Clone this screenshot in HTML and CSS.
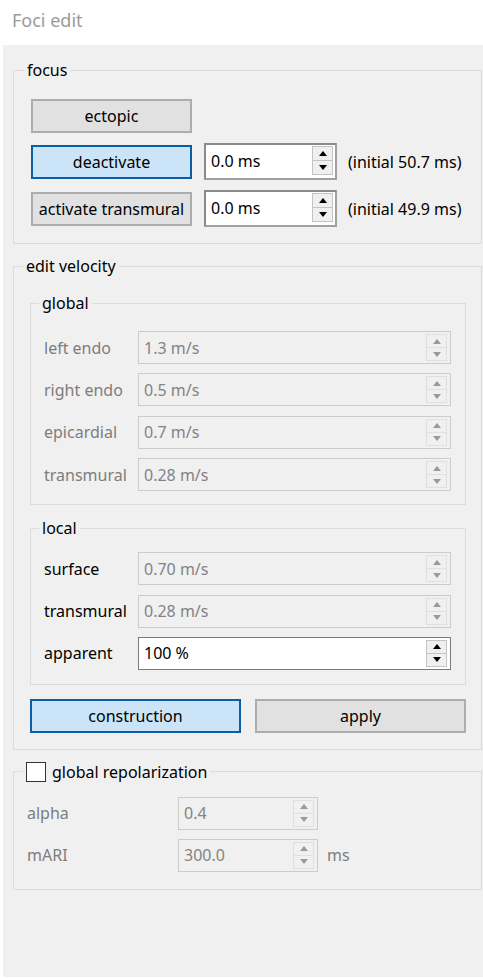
FILE: index.html
```html
<!DOCTYPE html>
<html lang="en">
<head>
<meta charset="utf-8">
<title>Foci edit</title>
<link rel="stylesheet" href="styles.css">
</head>
<body>
<div class="window">
  <header class="titlebar">Foci edit</header>
  <main class="panel">

    <fieldset class="group group-focus">
      <legend>focus</legend>
      <div class="focus-row row-ectopic">
        <button class="btn btn-focus">ectopic</button>
      </div>
      <div class="focus-row">
        <button class="btn btn-focus btn-on">deactivate</button>
        <div class="spin spin-focus">
          <span class="spin-value">0.0 ms</span>
          <span class="spin-arrows"><span class="arrow up"></span><span class="arrow down"></span></span>
        </div>
        <span class="note">(initial 50.7 ms)</span>
      </div>
      <div class="focus-row">
        <button class="btn btn-focus">activate transmural</button>
        <div class="spin spin-focus">
          <span class="spin-value">0.0 ms</span>
          <span class="spin-arrows"><span class="arrow up"></span><span class="arrow down"></span></span>
        </div>
        <span class="note">(initial 49.9 ms)</span>
      </div>
    </fieldset>

    <fieldset class="group group-velocity">
      <legend>edit velocity</legend>

      <fieldset class="group group-global">
        <legend>global</legend>
        <div class="form-grid">
          <span class="label off">left endo</span>
          <div class="spin off"><span class="spin-value">1.3 m/s</span><span class="spin-arrows"><span class="arrow up"></span><span class="arrow down"></span></span></div>
          <span class="label off">right endo</span>
          <div class="spin off"><span class="spin-value">0.5 m/s</span><span class="spin-arrows"><span class="arrow up"></span><span class="arrow down"></span></span></div>
          <span class="label off">epicardial</span>
          <div class="spin off"><span class="spin-value">0.7 m/s</span><span class="spin-arrows"><span class="arrow up"></span><span class="arrow down"></span></span></div>
          <span class="label off">transmural</span>
          <div class="spin off"><span class="spin-value">0.28 m/s</span><span class="spin-arrows"><span class="arrow up"></span><span class="arrow down"></span></span></div>
        </div>
      </fieldset>

      <fieldset class="group group-local">
        <legend>local</legend>
        <div class="form-grid">
          <span class="label">surface</span>
          <div class="spin off"><span class="spin-value">0.70 m/s</span><span class="spin-arrows"><span class="arrow up"></span><span class="arrow down"></span></span></div>
          <span class="label">transmural</span>
          <div class="spin off"><span class="spin-value">0.28 m/s</span><span class="spin-arrows"><span class="arrow up"></span><span class="arrow down"></span></span></div>
          <span class="label">apparent</span>
          <div class="spin spin-live"><span class="spin-value">100 %</span><span class="spin-arrows"><span class="arrow up"></span><span class="arrow down"></span></span></div>
        </div>
      </fieldset>

      <div class="action-row">
        <button class="btn btn-on">construction</button>
        <button class="btn">apply</button>
      </div>
    </fieldset>

    <fieldset class="group group-repol">
      <legend><span class="checkbox"></span><span>global repolarization</span></legend>
      <div class="repol-grid">
        <span class="label off">alpha</span>
        <div class="spin off spin-short"><span class="spin-value">0.4</span><span class="spin-arrows"><span class="arrow up"></span><span class="arrow down"></span></span></div>
        <span></span>
        <span class="label off">mARI</span>
        <div class="spin off spin-short"><span class="spin-value">300.0</span><span class="spin-arrows"><span class="arrow up"></span><span class="arrow down"></span></span></div>
        <span class="unit off">ms</span>
      </div>
    </fieldset>

  </main>
</div>
</body>
</html>
```
FILE: styles.css
```css
* { box-sizing: border-box; }

html, body {
  margin: 0;
  background: #ffffff;
}

body {
  font-family: "Noto Sans", "Open Sans", sans-serif;
  font-size: 16px;
  color: #000;
}

.window {
  width: 483px;
  height: 978px;
  display: flex;
  flex-direction: column;
}

.titlebar {
  height: 45px;
  padding: 7px 0 0 12px;
  color: #9a9a9a;
  font-size: 18px;
  line-height: 26px;
}

.panel {
  margin-left: 3px;
  height: 932px;
  background: #f0f0f0;
  padding: 15px 1px 0 10px;
  display: flex;
  flex-direction: column;
}

/* group boxes */
fieldset.group {
  margin: 0;
  min-width: 0;
  border: 1px solid #dcdcdc;
}

fieldset.group > legend {
  padding: 0 3px;
  height: 20px;
  line-height: 20px;
  font-size: 16px;
}

.group-focus { padding: 19px 10px 16px 17px; }
.group-focus > legend { margin-left: -7px; }

.group-velocity { margin-top: 12px !important; padding: 17px 15px 16px 16px; }
.group-velocity > legend { margin-left: -7px; }

.group-global { padding: 18px 14px 13px 13px; }
.group-global > legend { margin-left: -5px; }

.group-local { margin-top: 13px !important; padding: 14px 14px 14px 13px; }
.group-local > legend { margin-left: -5px; }

.group-repol { margin-top: 12px !important; padding: 15px 13px 17px 13px; }
.group-repol > legend {
  margin-left: -4px;
  padding: 0 5px 0 1px;
  height: 22px;
  line-height: 22px;
  display: flex;
  align-items: center;
  gap: 6px;
}

/* focus rows */
.focus-row {
  display: flex;
  align-items: center;
  height: 37px;
  margin-top: 10px;
}
.focus-row.row-ectopic { height: 34px; margin-top: 0; margin-bottom: 2px; }

.note { margin-left: 11px; white-space: nowrap; }

/* push buttons */
.btn {
  font: inherit;
  color: #000;
  height: 34px;
  padding: 0;
  background: #e1e1e1;
  border: 2px solid #adadad;
  border-radius: 0;
  white-space: nowrap;
}
.btn-focus { width: 161px; flex: none; }
.btn-on {
  background: #cce4f7;
  border-color: #0a5ea6;
}

/* spin boxes */
.spin {
  display: flex;
  align-items: stretch;
  height: 33px;
  border: 1px solid #7a7a7a;
  background: #fff;
  padding: 2px 3px 2px 0;
}
.spin-focus {
  width: 133px;
  height: 37px;
  margin-left: 12px;
  border: 2px solid #a0a0a0;
  border-top-color: #8a8a8a;
  border-left-color: #8a8a8a;
  padding: 1px 2px 3px 0;
}
.spin-value {
  flex: 1;
  display: flex;
  align-items: center;
  padding-left: 5px;
  white-space: nowrap;
}
.spin-arrows {
  width: 21px;
  display: flex;
  flex-direction: column;
}
.arrow {
  flex: 1;
  display: flex;
  align-items: center;
  justify-content: center;
  background: #f0f0f0;
  border: 1px solid #c4c4c4;
}
.arrow + .arrow { border-top: 0; }
.arrow::after {
  content: "";
  width: 0;
  height: 0;
  border-left: 4px solid transparent;
  border-right: 4px solid transparent;
}
.arrow.up::after { border-bottom: 5px solid #000; }
.arrow.down::after { border-top: 5px solid #000; }

.spin.off {
  background: #f0f0f0;
  border-color: #cccccc;
  color: #838383;
}
.spin.off .arrow { border-color: #e0e0e0; }
.spin.off .arrow.up::after { border-bottom-color: #9a9a9a; }
.spin.off .arrow.down::after { border-top-color: #9a9a9a; }

.spin-live { border-color: #7a7a7a; }

/* label / field grids */
.form-grid {
  display: grid;
  grid-template-columns: 94px 1fr;
  grid-auto-rows: 33px;
  row-gap: 9.4px;
  align-items: center;
}
.label { white-space: nowrap; }
.label.off, .unit.off { color: #7d7d7d; }

.action-row {
  display: flex;
  gap: 14px;
  margin-top: 14px;
}
.action-row .btn { flex: 1; }

.repol-grid {
  display: grid;
  grid-template-columns: 151px 140px auto;
  grid-auto-rows: 33px;
  row-gap: 9px;
  align-items: center;
}
.unit { margin-left: 9px; }

.checkbox {
  width: 20px;
  height: 20px;
  border: 1px solid #333;
  background: #fff;
  flex: none;
}
```
